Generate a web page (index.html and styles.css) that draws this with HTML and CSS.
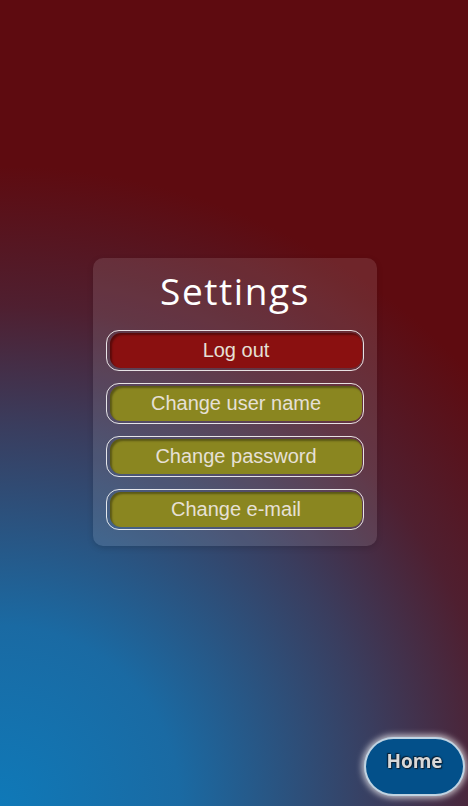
FILE: index.html
```html
<!DOCTYPE html>
<html lang="en">
<head>
<meta charset="utf-8">
<title>Settings</title>
<link rel="stylesheet" href="styles.css">
</head>
<body>
<main class="page">
  <section class="card">
    <h1 class="title">Settings</h1>
    <div class="actions">
      <div class="frame"><button class="btn btn-danger">Log out</button></div>
      <div class="frame"><button class="btn btn-olive">Change user name</button></div>
      <div class="frame"><button class="btn btn-olive">Change password</button></div>
      <div class="frame"><button class="btn btn-olive">Change e-mail</button></div>
    </div>
  </section>
</main>
<button class="home">Home</button>
</body>
</html>
```
FILE: styles.css
```css
html, body {
  margin: 0;
  padding: 0;
  height: 100%;
}
body {
  background: radial-gradient(circle at 0% 100%, #0f79b8 0px, #1a6aa3 180px, #3a3d5e 380px, #4f1f30 500px, #5e0b10 640px, #5e0b10 100%);
  font-family: "Liberation Sans", Arial, sans-serif;
  overflow: hidden;
}
.page {
  min-height: 100vh;
  display: flex;
  align-items: center;
  justify-content: center;
  padding: 0 0 2px 2px;
  box-sizing: border-box;
}
.card {
  width: 284px;
  box-sizing: border-box;
  padding: 8px 13px 16px;
  border-radius: 10px;
  background: rgba(255, 255, 255, 0.11);
  box-shadow: 0 2px 6px rgba(0, 0, 0, 0.15);
}
.title {
  margin: 0 0 14px;
  font-family: "Open Sans", "Noto Sans", sans-serif;
  font-weight: 400;
  font-size: 37px;
  letter-spacing: 1.6px;
  line-height: 50px;
  text-align: center;
  color: #ffffff;
}
.actions {
  display: flex;
  flex-direction: column;
  gap: 12px;
}
.frame {
  border: 1px solid rgba(255, 255, 255, 0.85);
  border-radius: 13px;
  padding: 2px 1px 2px 3px;
}
.btn {
  display: block;
  width: 100%;
  height: 35px;
  border: none;
  border-radius: 11px;
  font-family: "Liberation Sans", Arial, sans-serif;
  font-size: 20px;
  color: #e6e0d6;
  box-shadow: inset 2px 2px 2px rgba(0, 0, 0, 0.35);
  padding: 0;
}
.btn-danger {
  background: #8a1010;
}
.btn-olive {
  background: #8a8620;
}
.home {
  position: fixed;
  right: 3px;
  bottom: 10px;
  width: 101px;
  height: 59px;
  border-radius: 30px;
  border: 2px solid rgba(255, 255, 255, 0.75);
  background: #03508a;
  box-shadow: 0 0 6px 2px rgba(255, 255, 255, 0.7);
  font-family: "Open Sans", "Noto Sans", sans-serif;
  font-weight: 700;
  font-size: 19px;
  color: #d8d8d8;
  text-shadow: 0 0 2px #0a1f33, 1px 1px 1px #0a1f33, -1px -1px 1px #0a1f33;
  padding: 0 0 12px;
  box-sizing: border-box;
}
```
